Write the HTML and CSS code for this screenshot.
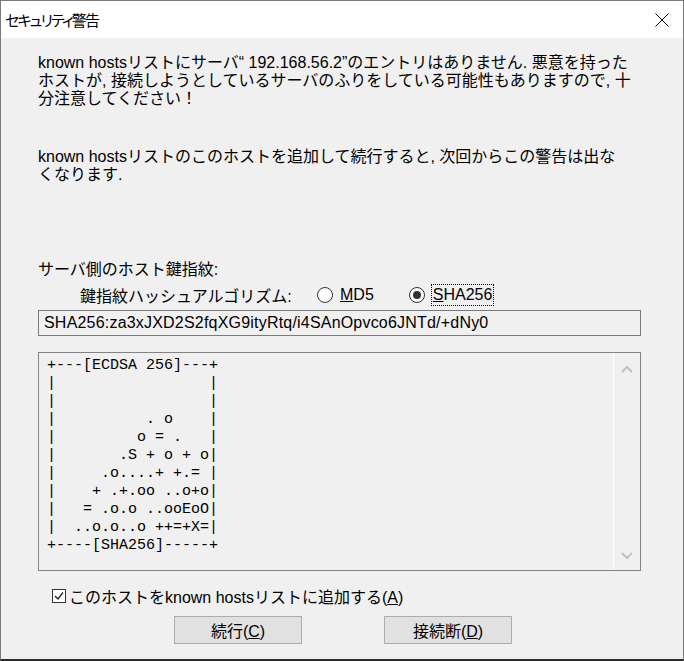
FILE: index.html
```html
<!DOCTYPE html>
<html lang="ja">

<head>
  <meta charset="UTF-8">
  <title>セキュリティ警告</title>
  <link rel="stylesheet" href="styles.css">
</head>

<body>
  <div class="window">
    <div class="titlebar">
      <span class="title">セキュリティ警告</span>
      <span class="close">
        <svg width="14" height="14" viewBox="0 0 14 14"><path d="M0.5 0.5 L13.5 13.5 M13.5 0.5 L0.5 13.5" stroke="#000" stroke-width="1" fill="none"/></svg>
      </span>
    </div>

    <div class="content">
      <p class="msg">known hostsリストにサーバ“ 192.168.56.2”のエントリはありません. 悪意を持った<br>ホストが, 接続しようとしているサーバのふりをしている可能性もありますので, 十<br>分注意してください！</p>
      <p class="msg second">known hostsリストのこのホストを追加して続行すると, 次回からこの警告は出な<br>くなります.</p>

      <p class="fp-label">サーバ側のホスト鍵指紋:</p>
      <div class="algo-row">
        <span class="algo-label">鍵指紋ハッシュアルゴリズム:</span>
        <span class="radio"><span class="circle"></span><span class="rlabel"><u>M</u>D5</span></span>
        <span class="radio checked"><span class="circle"></span><span class="rlabel focus"><u>S</u>HA256</span></span>
      </div>
      <div class="field">SHA256:za3xJXD2S2fqXG9ityRtq/i4SAnOpvco6JNTd/+dNy0</div>

      <div class="art-box">
<pre class="art">+---[ECDSA 256]---+
|                 |
|                 |
|          . o    |
|         o = .   |
|       .S + o + o|
|     .o....+ +.= |
|    + .+.oo ..o+o|
|   = .o.o ..ooEoO|
|  ..o.o..o ++=+X=|
+----[SHA256]-----+</pre>
        <div class="scrollbar">
          <svg width="12" height="8" viewBox="0 0 12 8"><path d="M1 7 L6 2 L11 7" stroke="#c2c2c2" stroke-width="2" fill="none"/></svg>
          <svg width="12" height="8" viewBox="0 0 12 8"><path d="M1 1 L6 6 L11 1" stroke="#c2c2c2" stroke-width="2" fill="none"/></svg>
        </div>
      </div>

      <div class="check-row">
        <span class="checkbox">
          <svg width="12" height="12" viewBox="0 0 12 12"><path d="M2 6 L5 9 L10 2.5" stroke="#222" stroke-width="1.3" fill="none"/></svg>
        </span>
        <span>このホストをknown hostsリストに追加する(<u>A</u>)</span>
      </div>

      <div class="buttons">
        <button class="btn">続行(<u>C</u>)</button>
        <button class="btn">接続断(<u>D</u>)</button>
      </div>
    </div>
  </div>
</body>

</html>
```

FILE: styles.css
```css
* {
  margin: 0;
  padding: 0;
  box-sizing: border-box;
}

body {
  background-color: #f0f0f0;
  font-family: "Liberation Sans", "Noto Sans CJK JP", sans-serif;
  font-size: 16px;
  color: #000;
}

.window {
  width: 684px;
  height: 661px;
  border: 1px solid #7b7b7b;
  border-bottom: 2px solid #2b2b2b;
  background-color: #f0f0f0;
}

/* タイトルバー */
.titlebar {
  height: 37px;
  background-color: #fff;
  display: flex;
  align-items: center;
  justify-content: space-between;
  padding: 0 14px 0 4px;
}

.title {
  font-family: "Noto Sans CJK JP", sans-serif;
  font-size: 15px;
  letter-spacing: -1.8px;
  font-feature-settings: "palt";
}

.close {
  display: flex;
}

/* 本文 */
.content {
  padding: 16px 42px 0 37px;
}

.msg {
  line-height: 18px;
  white-space: nowrap;
}

.msg.second {
  margin-top: 40px;
}

.fp-label {
  margin-top: 77px;
  line-height: 18px;
}

.algo-row {
  display: flex;
  align-items: center;
  height: 22px;
  margin-top: 5px;
  padding-left: 42px;
}

.algo-label {
  width: 237px;
  white-space: nowrap;
}

.radio {
  display: flex;
  align-items: center;
}

.radio + .radio {
  margin-left: 34px;
}

.circle {
  width: 16px;
  height: 16px;
  border: 1px solid #333;
  border-radius: 50%;
  background-color: #fff;
  margin-right: 6px;
  display: flex;
  align-items: center;
  justify-content: center;
}

.radio.checked .circle::after {
  content: "";
  width: 8px;
  height: 8px;
  border-radius: 50%;
  background-color: #333;
}

.rlabel {
  line-height: 18px;
  padding: 1px 1px;
}

.rlabel.focus {
  border: 1px dotted #000;
}

.field {
  margin-top: 4px;
  height: 26px;
  border: 1px solid #7a7a7a;
  padding: 0 5px;
  line-height: 24px;
  letter-spacing: 0.2px;
  white-space: nowrap;
}

/* ランダムアート */
.art-box {
  margin-top: 16px;
  height: 219px;
  border: 1px solid #838383;
  display: flex;
}

.art {
  flex: 1;
  font-family: "Liberation Mono", monospace;
  font-size: 15px;
  line-height: 18px;
  padding: 4px 0 0 8px;
}

.scrollbar {
  width: 27px;
  border-left: 1px solid #fff;
  display: flex;
  flex-direction: column;
  justify-content: space-between;
  align-items: center;
  padding: 12px 0 10px;
}

.check-row {
  display: flex;
  align-items: center;
  margin-top: 16px;
  padding-left: 14px;
  height: 18px;
}

.checkbox {
  width: 14px;
  height: 14px;
  border: 1px solid #333;
  background-color: #fff;
  margin-right: 3px;
  display: flex;
  align-items: center;
  justify-content: center;
}

.buttons {
  display: flex;
  gap: 82px;
  margin-top: 11px;
  padding-left: 136px;
}

.btn {
  width: 128px;
  height: 28px;
  background-color: #e1e1e1;
  border: 1px solid #adadad;
  font-family: "Liberation Sans", "Noto Sans CJK JP", sans-serif;
  font-size: 16px;
  color: #000;
}
```
